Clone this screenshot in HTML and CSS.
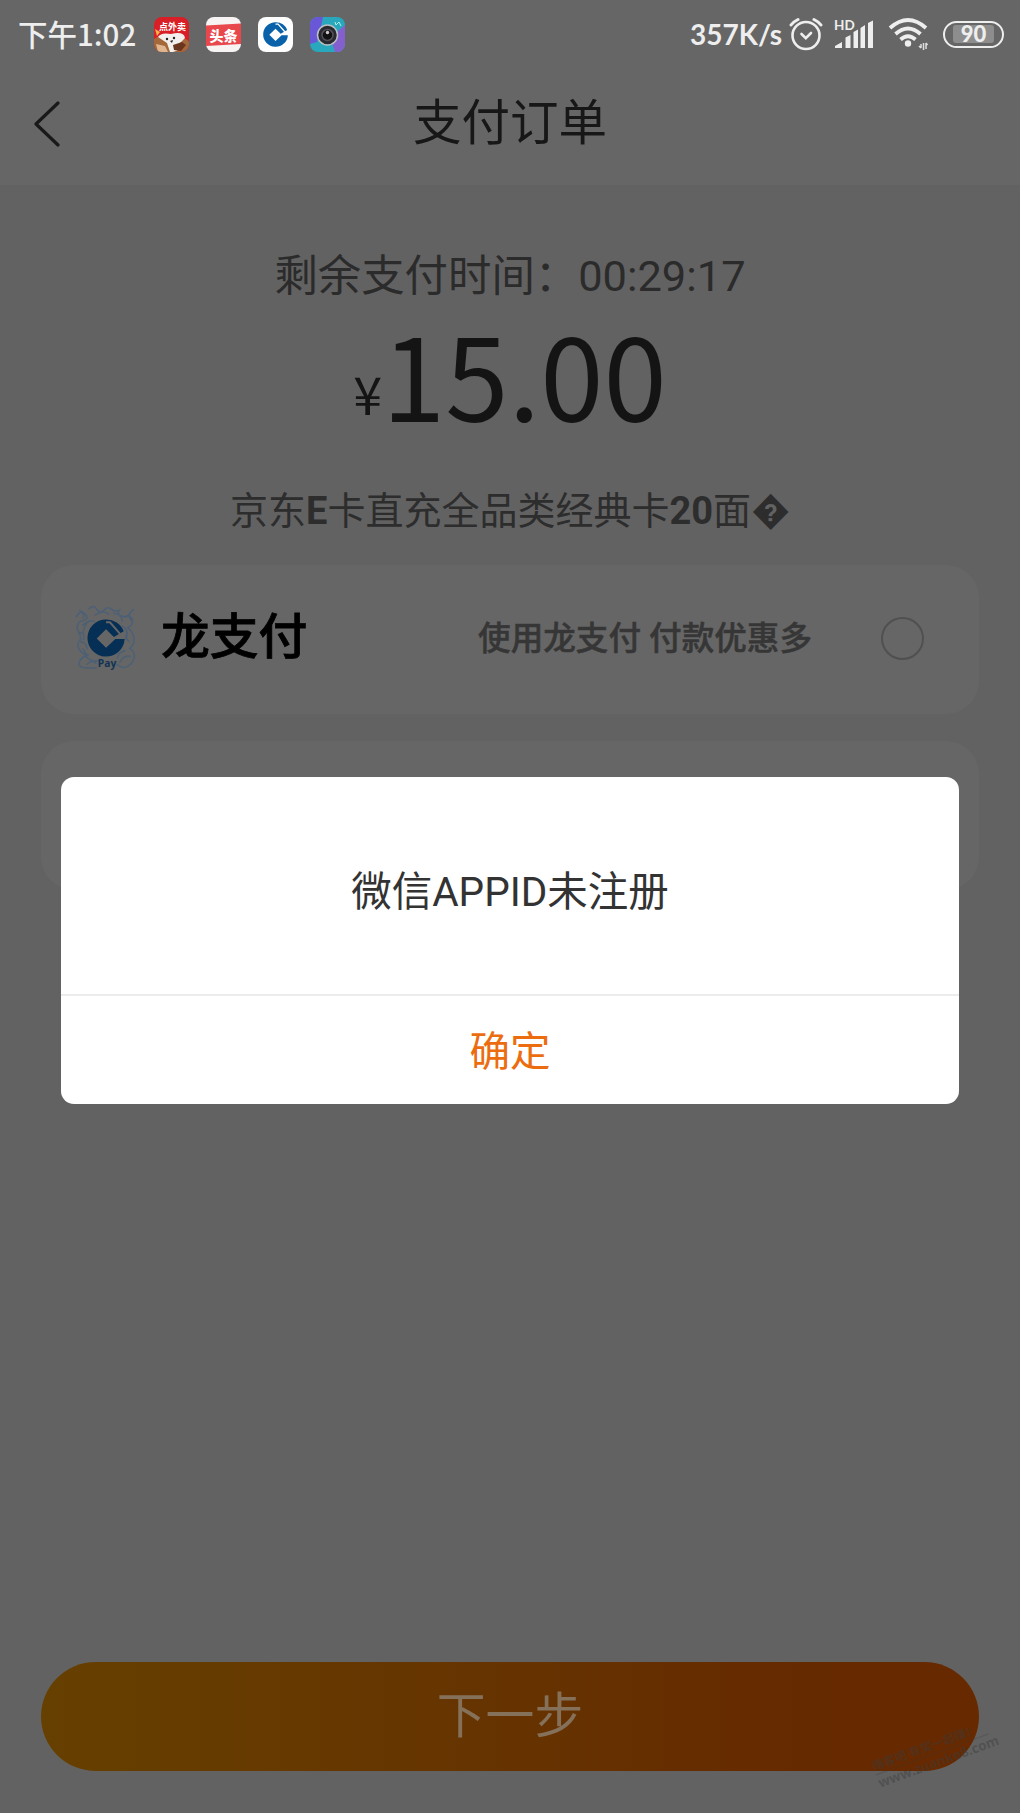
FILE: index.html
```html
<!DOCTYPE html>
<html lang="zh-CN">
<head>
<meta charset="utf-8">
<title>支付订单</title>
<link rel="stylesheet" href="styles.css">
</head>
<body>
<svg width="0" height="0" class="defs" aria-hidden="true">
  <symbol id="ccb" viewBox="0 0 40 40">
    <path fill="currentColor" d="M20 1A19 19 0 1 0 39 21H29.500L20 30L10.500 20.500L20 11L28 19L38 13A19 19 0 0 0 20 1Z"/>
    <path stroke="var(--gap)" stroke-width="2" d="M20 4L24 4L35 16.500" fill="none"/>
  </symbol>
</svg>
<div class="page">
  <div class="status">
    <div class="status-left">
      <span class="clock">下午1:02</span>
      <div class="apps">
        <svg class="app" viewBox="0 0 35 35"><defs><clipPath id="r"><rect width="35" height="35" rx="8"/></clipPath></defs><g clip-path="url(#r)"><rect width="35" height="35" fill="#d91f25"/><path d="M0 22Q6 17 12 21H26Q33 21 35 25V35H0Z" fill="#a5683a"/><path d="M4 20Q7 15 17 17Q30 14 31 21L26 26Q28 33 19 35H16L13 26Z" fill="#f3efec"/><path d="M1 12l5 3-3 4z" fill="#f4b54c"/><path d="M2 27l9 2 3 6H4z" fill="#dfb68e"/><circle cx="13" cy="22" r="1.200" fill="#222"/><circle cx="20" cy="21" r="1.200" fill="#222"/><path d="M16 24l3-1-1 3z" fill="#222"/><path d="M19 28l9-3 4 3-5 6-7-1z" fill="#6b351e"/><text class="tiny" x="5" y="12.500">点外卖</text></g></svg>
        <svg class="app" viewBox="0 0 35 35"><rect width="35" height="35" rx="8" fill="#f7f3f3"/><path d="M0 8.500L35 6.500V27L0 29Z" fill="#e8474b"/><text class="news" x="3.500" y="23.500">头条</text></svg>
        <svg class="app app-bank" viewBox="0 0 35 35"><rect width="35" height="35" rx="8" fill="#fdfdfd"/><use href="#ccb" x="4.500" y="4.500" width="26" height="26"/></svg>
        <svg class="app" viewBox="0 0 35 35"><g clip-path="url(#r)"><rect width="35" height="35" fill="#28a7bd"/><path d="M0 0H13L10 14L7 25L0 27Z" fill="#6a57d8"/><path d="M35 8V35H25L22 26L28 14Z" fill="#8460cf"/><path d="M25 5l1 3 3-3 2 4" fill="none" stroke="#b5ede3"/></g><circle cx="17.500" cy="18" r="10" fill="#292a30" stroke="#b9bfc3" stroke-width="1.500"/><circle cx="17.500" cy="18" r="5.500" fill="#111" stroke="#55505a" stroke-width="1.500"/><circle cx="17.500" cy="15.500" r="1.700" fill="#d0c5c8"/></svg>
      </div>
    </div>
    <div class="status-right">
      <span class="speed">357K/s</span>
      <svg class="alarm" viewBox="0 0 34 34"><g fill="none" stroke="#eee" stroke-width="2.600" stroke-linecap="round"><circle cx="17" cy="18.500" r="13.500"/><path d="M12.500 17l4.300 4.200L22 16"/><path stroke-width="3" d="M2 8Q4 5 9 2.500M32 8Q30 5 25 2.500"/></g></svg>
      <svg class="signal" viewBox="0 0 40 32"><g fill="#eee"><path d="M1 30V28L8 24V30ZM11.500 30V19.500L16.500 17V30ZM19.500 30V14L24 11.500V30ZM26.500 30V10L31 7V30ZM34 30V5L39 2.500V30Z"/></g><text class="hd" x="0" y="11.500">HD</text></svg>
      <svg class="wifi" viewBox="0 0 42 34"><g fill="none" stroke="#eee" stroke-width="3.800"><path d="M2 11Q20 -5 38 11"/><path d="M7.500 17Q20 6 32.500 17"/><path d="M12.500 22.500Q20 16 27.500 22.500"/></g><circle cx="20" cy="26.500" r="3.200" fill="#eee"/><path d="M33 31V27M33 31l-2-2M35.500 26V33M38 26v6M38 26l1.500 2" fill="none" stroke="#ddd" stroke-width="1.500"/></svg>
      <div class="battery"><span class="level">90</span></div>
    </div>
  </div>
  <header class="nav">
    <svg class="back" viewBox="0 0 28 46"><path d="M25 2L3 23L25 44" fill="none" stroke="#191919" stroke-width="3.200" stroke-linecap="round" stroke-linejoin="round"/></svg>
    <h1 class="title">支付订单</h1>
  </header>
  <main class="main">
    <p class="timer">剩余支付时间：00:29:17</p>
    <div class="amount"><span class="yen">¥</span><span class="sum">15.00</span></div>
    <p class="goods">京东<b>E</b>卡直充全品类经典卡<b>20</b>面<b>&#xFFFD;</b></p>
    <section class="card">
      <svg class="longpay" viewBox="0 0 60 64">
        <g fill="none" stroke="#4c6076" stroke-width="1.500">
          <path d="M2 12q4-8 9-3t-5 7q-5 4-2 9t2 9q-4 4-1 9t9 5q-8 3-9 8t7 5h10M14 4q5-5 8 0t7 1 7-1 8 1q-3 5 3 6t8-5M58 4q-7 5-3 10t-3 8q5 4 6 10t-4 10q6 4 4 10t-7 8-10-3M8 20q6-6 12-4M10 48q6 8 14 6M6 36q5-1 7 7M38 8q8 0 9 8M46 20q8 4 4 14M44 56q4-8 11-6"/>
          <path d="M20 10q8-6 14-1M4 28q7-4 5 6M52 26q-4 6 2 10M50 44q-8 2-8 8M12 58q5-6 10-1M5 5q6 3 4 8M49 12q6-3 8 3M15 15q-7 6-6 14M8 42q4 3 3 9"/>
        </g>
        <circle cx="31" cy="32" r="17" fill="#666"/>
        <use href="#ccb" x="12" y="13" width="38" height="38"/>
        <text class="pay" x="23" y="60">Pay</text>
      </svg>
      <span class="method">龙支付</span>
      <span class="promo">使用龙支付 付款优惠多</span>
      <span class="radio"></span>
    </section>
    <section class="card card-empty"></section>
    <div class="footer"><div class="next">下一步</div></div>
  </main>
  <div class="dialog">
    <div class="message">微信APPID未注册</div>
    <div class="confirm">确定</div>
  </div>
  <div class="watermark"><span class="wm-line">赚客吧 有奖一起赚！</span><span>www.zuanke8.com</span></div>
</div>
</body>
</html>
```
FILE: styles.css
```css
* { box-sizing: border-box; }
body { margin: 0; font-family: Roboto, "Noto Sans CJK SC", sans-serif; }
.defs { position: absolute; }
.page { position: relative; display: flex; flex-direction: column; width: 1020px; height: 1813px; overflow: hidden; background: #626262; }
.status { display: flex; justify-content: space-between; align-items: center; height: 68px; padding: 0 16px 0 18px; background: #666; color: #eee; }
.status-left, .status-right, .apps { display: flex; align-items: center; }
.status-left { gap: 18px; }
.clock { width: 118px; padding-bottom: 2px; font: 500 29.500px/66px "Noto Sans CJK SC", sans-serif; white-space: nowrap; }
.apps { gap: 17px; }
.app { width: 35px; height: 35px; }
.app-bank { color: #0961a9; --gap: #fff; }
.tiny { font: 700 9px "Noto Sans CJK SC", sans-serif; fill: #fff; }
.news { font: 900 14px "Noto Sans CJK SC", sans-serif; fill: #fff; }
.speed { width: 93px; margin-right: 6px; font: 700 28px/68px Lato, sans-serif; white-space: nowrap; }
.alarm { width: 34px; height: 34px; margin-right: 11px; }
.signal { width: 40px; height: 32px; margin-right: 14px; overflow: visible; }
.hd { font: 700 13.500px Lato, sans-serif; fill: #eee; }
.wifi { width: 42px; height: 34px; margin-right: 13px; }
.battery { width: 61px; height: 27px; padding: 2px 8px; border: 2.500px solid #eee; border-radius: 14px; }
.level { display: block; height: 18px; border-radius: 3px; background: #8d8d8d; font: 900 22px/18px Lato, sans-serif; text-align: center; }
.nav { display: grid; grid-template-columns: 100px 1fr 100px; align-items: center; height: 117px; padding-bottom: 5px; background: #666; }
.back { width: 28px; height: 46px; margin-left: 33px; }
.title { margin: 0; color: #171717; font-size: 48.500px; line-height: 70px; font-weight: 400; text-align: center; }
.main { display: flex; flex: 1; flex-direction: column; padding: 57px 41px 42px; }
.timer { margin: 0; color: #2b2b2b; font-size: 43.400px; line-height: 70px; text-align: center; }
.amount { display: flex; justify-content: center; align-items: baseline; height: 141px; color: #141414; font-family: "Noto Sans CJK SC", sans-serif; line-height: 122px; }
.yen { padding-bottom: 7px; font-size: 52px; transform: translateY(-7px); }
.sum { font-size: 114px; }
.goods { margin: 28px 0 24px; color: #2d2d2d; font-size: 38px; line-height: 60px; text-align: center; white-space: nowrap; }
.card { display: flex; align-items: center; flex: none; height: 149px; margin-bottom: 27px; padding: 0 55px 3px 33px; border-radius: 33px; background: #666; }
.longpay { width: 62px; height: 66px; color: #062f55; --gap: #666; }
.pay { font: 700 10px "Open Sans", sans-serif; fill: #123354; }
.method { margin-left: 25px; color: #000; font-size: 48.800px; font-weight: 500; line-height: 70px; -webkit-text-stroke: .8px #000; }
.promo { margin-left: auto; padding-bottom: 5px; color: #363636; font-size: 32.600px; font-weight: 500; -webkit-text-stroke: .5px #363636; }
.radio { width: 43px; height: 43px; margin-left: 69px; border: 2px solid #505050; border-radius: 50%; }
.footer { margin-top: auto; }
.next { height: 109px; border-radius: 55px; background: linear-gradient(90deg, #664000, #663300 50%, #662900 85%, #662900); color: #857059; font-size: 48.800px; line-height: 110px; text-align: center; }
.dialog { position: absolute; left: 61px; top: 777px; display: flex; flex-direction: column; width: 898px; height: 327px; border-radius: 13px; background: #fff; font-size: 40.500px; text-align: center; }
.message { height: 219px; border-bottom: 2px solid #ececec; color: #333; line-height: 231px; }
.confirm { color: #eb6d10; line-height: 112px; }
.watermark { position: absolute; left: 872px; top: 1737px; display: flex; flex-direction: column; width: 120px; color: rgba(60, 60, 60, .45); font: 700 13.500px/17px "Open Sans", "Noto Sans CJK SC", sans-serif; white-space: nowrap; transform: rotate(-20deg); }
.wm-line { border-bottom: 1px solid rgba(60, 60, 60, .3); font-size: 12px; }
```
